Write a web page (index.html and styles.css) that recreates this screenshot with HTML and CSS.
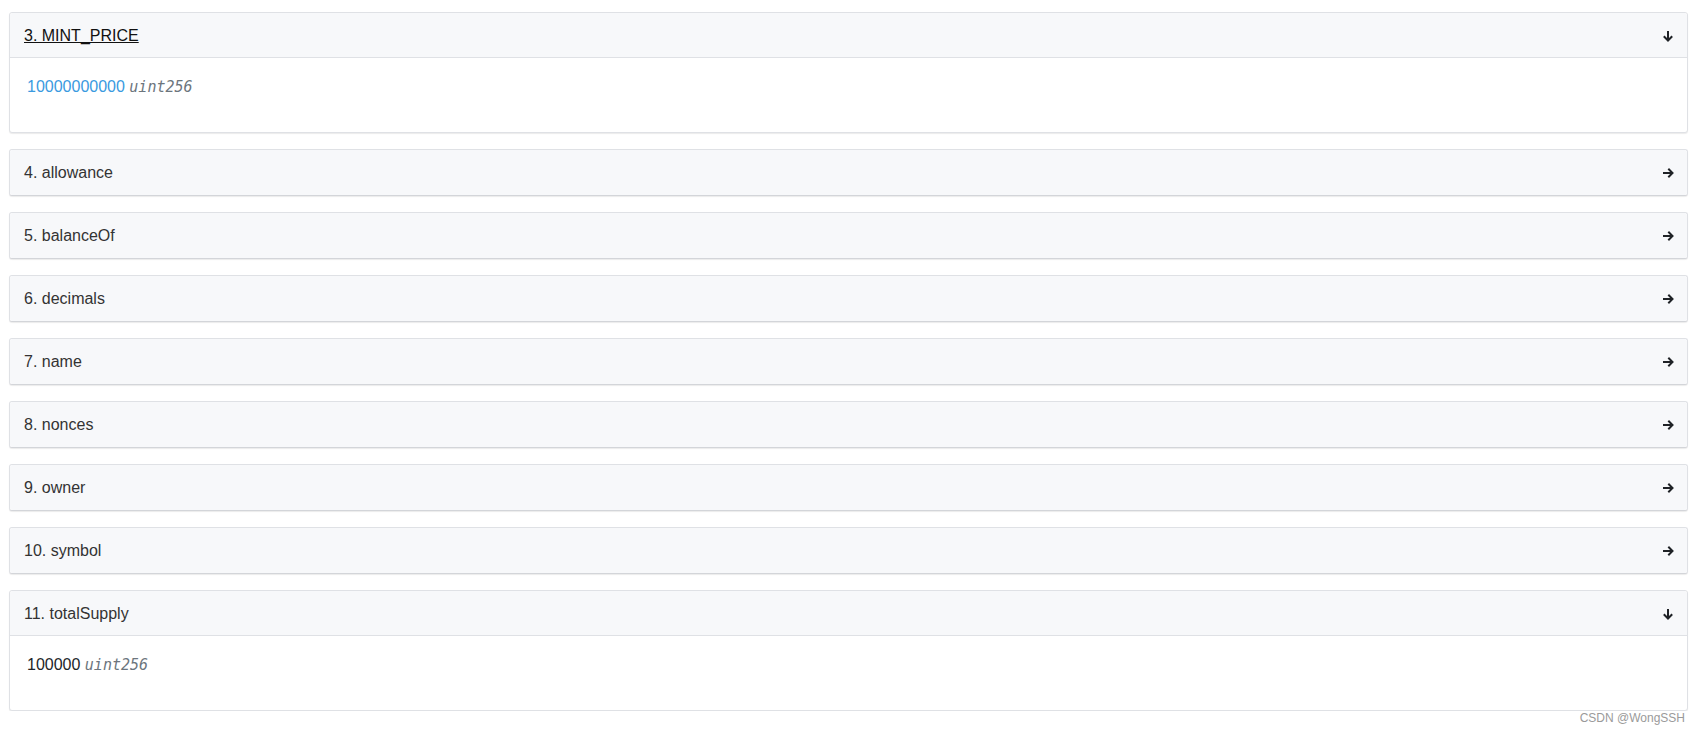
FILE: index.html
```html
<!doctype html>
<html>
<head>
	<meta charset='utf-8' />
	<title>Read Contract</title>
	<link rel="stylesheet" href="styles.css">
</head>

<body>
	<div class='list'>
		<div class='card open'>
			<div class='head'>
				<span class='title link'>3. MINT_PRICE</span>
				<svg class='arrow' viewBox='0 0 12 12'><path d='M6 1v9.5M1.8 6.3L6 10.5l4.2-4.2' /></svg>
			</div>
			<div class='body'>
				<span class='val blue'>10000000000</span> <i class='type'>uint256</i>
			</div>
		</div>

		<div class='card'>
			<div class='head'>
				<span class='title'>4. allowance</span>
				<svg class='arrow' viewBox='0 0 12 12'><path d='M1 6h9.5M6.3 1.8L10.5 6l-4.2 4.2' /></svg>
			</div>
		</div>
		<div class='card'>
			<div class='head'>
				<span class='title'>5. balanceOf</span>
				<svg class='arrow' viewBox='0 0 12 12'><path d='M1 6h9.5M6.3 1.8L10.5 6l-4.2 4.2' /></svg>
			</div>
		</div>
		<div class='card'>
			<div class='head'>
				<span class='title'>6. decimals</span>
				<svg class='arrow' viewBox='0 0 12 12'><path d='M1 6h9.5M6.3 1.8L10.5 6l-4.2 4.2' /></svg>
			</div>
		</div>
		<div class='card'>
			<div class='head'>
				<span class='title'>7. name</span>
				<svg class='arrow' viewBox='0 0 12 12'><path d='M1 6h9.5M6.3 1.8L10.5 6l-4.2 4.2' /></svg>
			</div>
		</div>
		<div class='card'>
			<div class='head'>
				<span class='title'>8. nonces</span>
				<svg class='arrow' viewBox='0 0 12 12'><path d='M1 6h9.5M6.3 1.8L10.5 6l-4.2 4.2' /></svg>
			</div>
		</div>
		<div class='card'>
			<div class='head'>
				<span class='title'>9. owner</span>
				<svg class='arrow' viewBox='0 0 12 12'><path d='M1 6h9.5M6.3 1.8L10.5 6l-4.2 4.2' /></svg>
			</div>
		</div>
		<div class='card'>
			<div class='head'>
				<span class='title'>10. symbol</span>
				<svg class='arrow' viewBox='0 0 12 12'><path d='M1 6h9.5M6.3 1.8L10.5 6l-4.2 4.2' /></svg>
			</div>
		</div>

		<div class='card open'>
			<div class='head'>
				<span class='title'>11. totalSupply</span>
				<svg class='arrow' viewBox='0 0 12 12'><path d='M6 1v9.5M1.8 6.3L6 10.5l4.2-4.2' /></svg>
			</div>
			<div class='body'>
				<span class='val'>100000</span> <i class='type'>uint256</i>
			</div>
		</div>
	</div>

	<div class='mark'>CSDN @WongSSH</div>
</body>
</html>
```

FILE: styles.css
```css
/*reset*/
body,div{margin:0;padding:0;}
body{font-family:"Liberation Sans",Arial,sans-serif;font-size:16px;color:#212529;background:#fff;}

/*list of cards*/
.list{display:flex;flex-direction:column;gap:16px;padding:12px 12px 0 9px;}
.card{border:1px solid #dfe1e5;border-radius:3px;background:#fff;box-shadow:0 1px 1px rgba(0,0,0,.08);}
.card:not(.open){border-bottom-color:#d3d5d9;}
.head{display:flex;align-items:center;justify-content:space-between;height:45px;padding:1px 13px 0 14px;box-sizing:border-box;background:#f7f8fa;border-bottom:1px solid #dfe1e5;border-radius:3px 3px 0 0;}
.card:not(.open) .head{border-bottom:0;border-radius:3px;}
.title{color:#333;}
.title.link{color:#111;text-decoration:underline;}
.arrow{width:12px;height:12px;fill:none;stroke:#1f2226;stroke-width:2;}

.body{height:74px;padding:17px 17px 0;box-sizing:border-box;line-height:24px;}
.val{color:#212529;}
.val.blue{color:#3a9ae0;}
.type{font-family:"DejaVu Sans Mono",monospace;font-size:15px;font-style:italic;color:#6c757d;}

/*watermark*/
.mark{position:absolute;right:15px;top:711px;font-size:12px;color:#9a9a9a;}
```
